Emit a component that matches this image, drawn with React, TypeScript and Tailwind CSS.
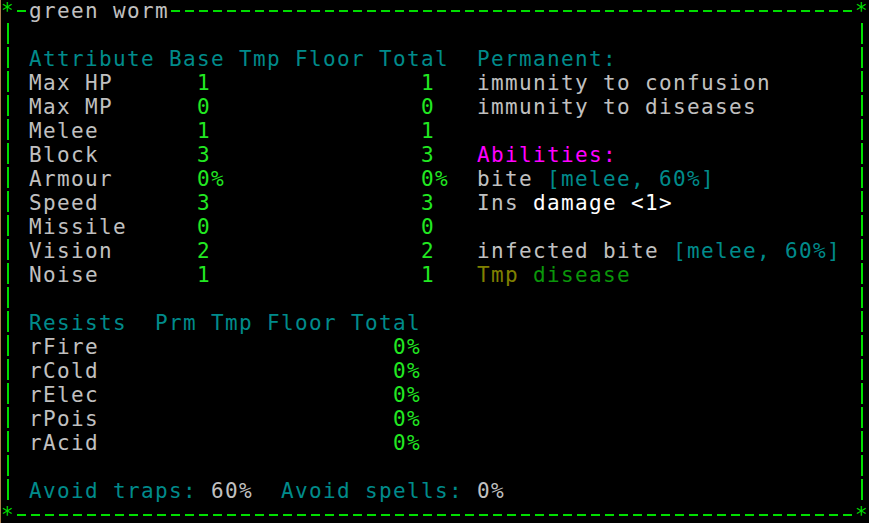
import React from "react";

type Seg = [number, string, string];

const GRAY = "text-[#c0c0c0]";
const TEAL = "text-[#008b8b]";
const GREEN = "text-[#22e822]";
const WHITE = "text-white";
const MAGENTA = "text-[#ff00ff]";
const OLIVE = "text-[#808000]";
const DKGREEN = "text-[#0a960a]";

// columns are absolute terminal columns (col 0 = left border)
const rows: Seg[][] = [
  [],
  [[2, "Attribute Base Tmp Floor Total", TEAL], [34, "Permanent:", TEAL]],
  [[2, "Max HP", GRAY], [14, "1", GREEN], [30, "1", GREEN], [34, "immunity to confusion", GRAY]],
  [[2, "Max MP", GRAY], [14, "0", GREEN], [30, "0", GREEN], [34, "immunity to diseases", GRAY]],
  [[2, "Melee", GRAY], [14, "1", GREEN], [30, "1", GREEN]],
  [[2, "Block", GRAY], [14, "3", GREEN], [30, "3", GREEN], [34, "Abilities:", MAGENTA]],
  [[2, "Armour", GRAY], [14, "0%", GREEN], [30, "0%", GREEN], [34, "bite ", GRAY], [39, "[melee, 60%]", TEAL]],
  [[2, "Speed", GRAY], [14, "3", GREEN], [30, "3", GREEN], [34, "Ins ", GRAY], [38, "damage <1>", WHITE]],
  [[2, "Missile", GRAY], [14, "0", GREEN], [30, "0", GREEN]],
  [[2, "Vision", GRAY], [14, "2", GREEN], [30, "2", GREEN], [34, "infected bite ", GRAY], [48, "[melee, 60%]", TEAL]],
  [[2, "Noise", GRAY], [14, "1", GREEN], [30, "1", GREEN], [34, "Tmp ", OLIVE], [38, "disease", DKGREEN]],
  [],
  [[2, "Resists  Prm Tmp Floor Total", TEAL]],
  [[2, "rFire", GRAY], [28, "0%", GREEN]],
  [[2, "rCold", GRAY], [28, "0%", GREEN]],
  [[2, "rElec", GRAY], [28, "0%", GREEN]],
  [[2, "rPois", GRAY], [28, "0%", GREEN]],
  [[2, "rAcid", GRAY], [28, "0%", GREEN]],
  [],
  [[2, "Avoid traps: ", TEAL], [15, "60%", GRAY], [20, "Avoid spells: ", TEAL], [34, "0%", GRAY]],
];

const Line = ({ segs }: { segs: Seg[] }) => {
  let col = 2;
  const parts: React.ReactNode[] = [];
  segs.forEach(([c, text, color], i) => {
    if (c > col) parts.push(" ".repeat(c - col));
    parts.push(
      <span key={i} className={color}>
        {text}
      </span>
    );
    col = c + text.length;
  });
  return <span className="whitespace-pre">{parts}</span>;
};

const Dashes = ({ className = "" }: { className?: string }) => (
  <div className={`h-[24px] ${className}`}>
    <div className="mt-[11px] h-[2px] bg-[repeating-linear-gradient(90deg,transparent_0_2px,#00dd00_2px_11px,transparent_11px_14px)]" />
  </div>
);

const Star = ({ bottom = false }: { bottom?: boolean }) => (
  <div
    className={
      bottom
        ? "w-[14px] h-[20px] pt-[4px] leading-[16px] text-[#00dd00] text-center"
        : "w-[14px] h-[24px] text-[#00dd00] text-center"
    }
  >
    *
  </div>
);

const VBar = () => (
  <div className="w-[14px] h-[24px] pl-[6px]">
    <div className="w-[2px] h-[21px] bg-[#00dd00]" />
  </div>
);

export default function App() {
  return (
    <div className="w-[869px] h-[523px] overflow-hidden bg-black border-l border-[#b08050]">
      <div className="-mt-px flex flex-col font-['DejaVu_Sans_Mono',monospace] text-[21px] leading-[24px] tracking-[1.357px]">
        <div className="flex">
          <Star />
          <Dashes className="w-[14px]" />
          <span className={`${GRAY} w-[140px] whitespace-pre`}>green worm</span>
          <Dashes className="flex-1" />
          <Star />
        </div>
        {rows.map((segs, i) => (
          <div key={i} className="flex">
            <VBar />
            <div className="flex-1 h-[24px] pl-[14px] overflow-hidden">
              <Line segs={segs} />
            </div>
            <VBar />
          </div>
        ))}
        <div className="flex h-[20px] overflow-hidden">
          <Star bottom />
          <Dashes className="flex-1" />
          <Star bottom />
        </div>
      </div>
    </div>
  );
}
